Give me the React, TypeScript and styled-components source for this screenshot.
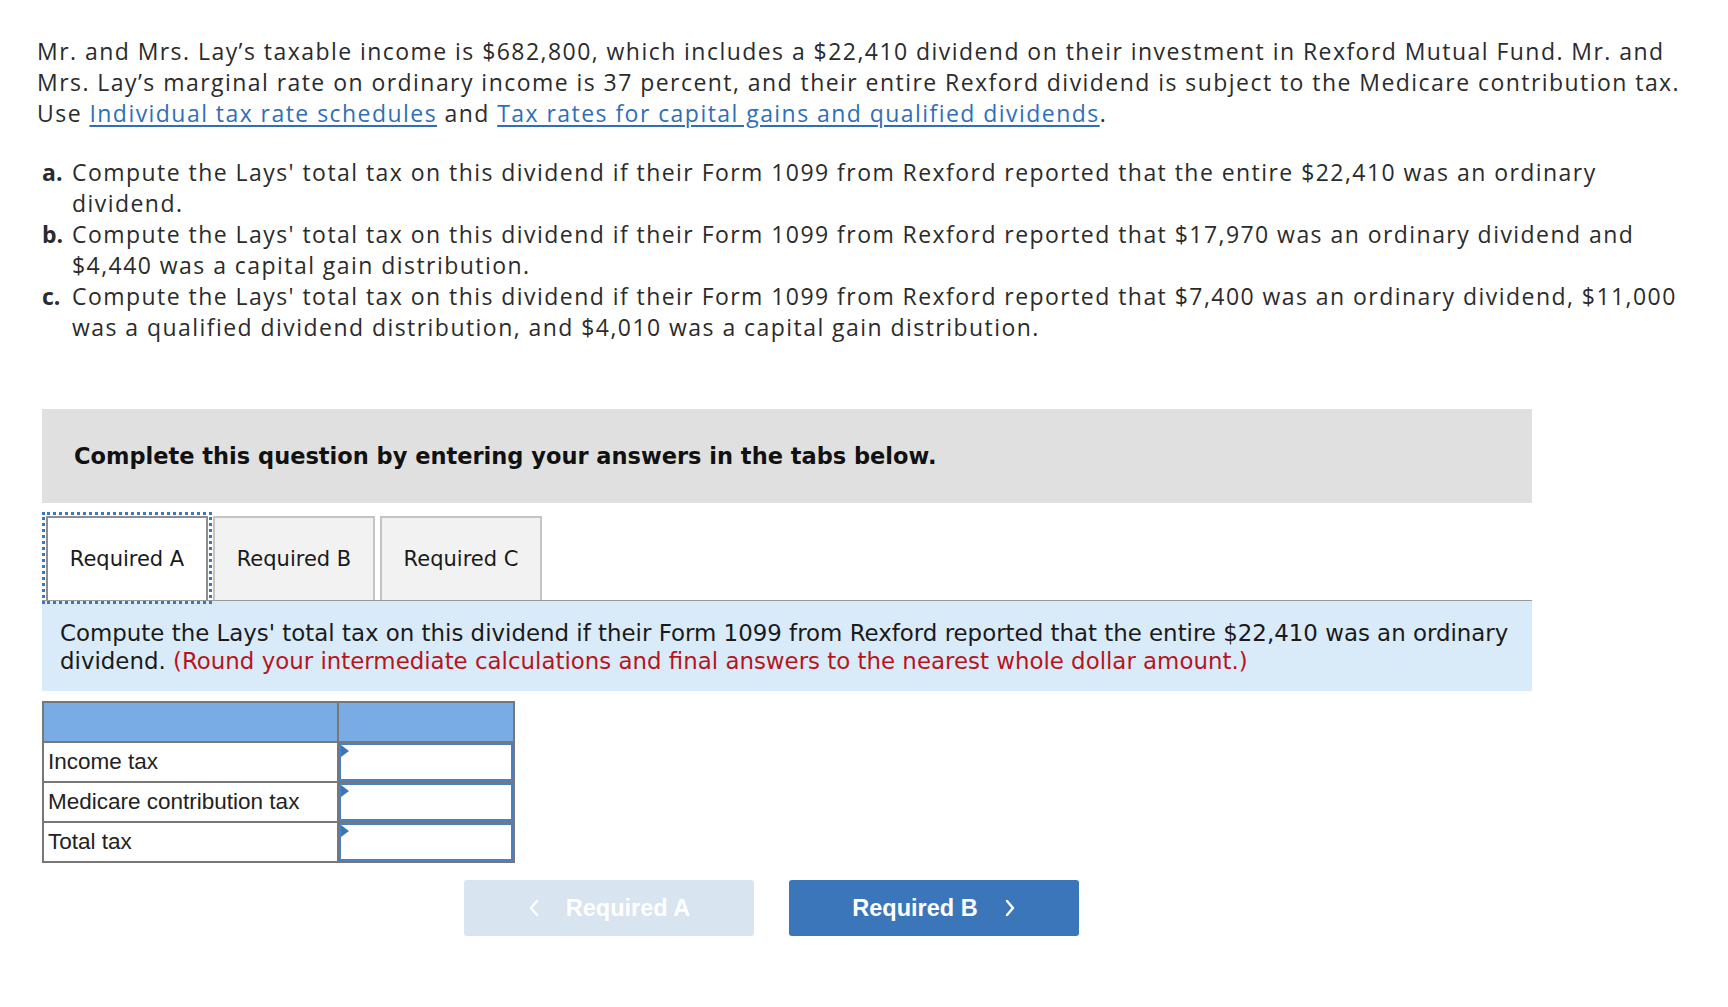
import * as React from 'react'
import styled, { createGlobalStyle } from 'styled-components'

const GlobalStyle = createGlobalStyle`
  html, body {
    margin: 0;
    padding: 0;
    background: #ffffff;
  }
  body {
    font-family: "Open Sans", Lato, sans-serif;
    color: #2b2b2b;
  }
`

type Row = { label: string }

const rows: Row[] = [
  { label: 'Income tax' },
  { label: 'Medicare contribution tax' },
  { label: 'Total tax' },
]

const tabs = ['Required A', 'Required B', 'Required C']

const App: React.FC = () => {
  const [active, setActive] = React.useState(0)

  return (
    <Page>
      <GlobalStyle />
      <Question>
        <Intro>
          Mr. and Mrs. Lay’s taxable income is $682,800, which includes a $22,410 dividend on their
          investment in Rexford Mutual Fund. Mr. and Mrs. Lay’s marginal rate on ordinary income is 37
          percent, and their entire Rexford dividend is subject to the Medicare contribution tax. Use{' '}
          <TextLink href="#">Individual tax rate schedules</TextLink> and{' '}
          <TextLink href="#">Tax rates for capital gains and qualified dividends</TextLink>.
        </Intro>
        <Parts>
          <Part>
            <PartLabel>a.</PartLabel>
            <PartText>
              Compute the Lays' total tax on this dividend if their Form 1099 from Rexford reported that the
              entire $22,410 was an ordinary dividend.
            </PartText>
          </Part>
          <Part>
            <PartLabel>b.</PartLabel>
            <PartText>
              Compute the Lays' total tax on this dividend if their Form 1099 from Rexford reported that
              $17,970 was an ordinary dividend and $4,440 was a capital gain distribution.
            </PartText>
          </Part>
          <Part>
            <PartLabel>c.</PartLabel>
            <PartText>
              Compute the Lays' total tax on this dividend if their Form 1099 from Rexford reported that
              $7,400 was an ordinary dividend, $11,000 was a qualified dividend distribution, and $4,010 was
              a capital gain distribution.
            </PartText>
          </Part>
        </Parts>
      </Question>

      <Answer>
        <Banner>Complete this question by entering your answers in the tabs below.</Banner>

        <TabBar>
          {tabs.map((t, i) => (
            <Tab key={t} active={i === active} onClick={() => setActive(i)}>
              {t}
            </Tab>
          ))}
        </TabBar>

        <Instructions>
          Compute the Lays' total tax on this dividend if their Form 1099 from Rexford reported that the
          entire $22,410 was an ordinary dividend.{' '}
          <Hint>(Round your intermediate calculations and final answers to the nearest whole dollar amount.)</Hint>
        </Instructions>

        <TaxTable>
          <thead>
            <tr>
              <HeadCell wide />
              <HeadCell />
            </tr>
          </thead>
          <tbody>
            {rows.map(r => (
              <tr key={r.label}>
                <LabelCell>{r.label}</LabelCell>
                <InputCell>
                  <Marker />
                  <AmountInput type="text" />
                </InputCell>
              </tr>
            ))}
          </tbody>
        </TaxTable>

        <NavRow>
          <NavButton disabled>
            <Chevron viewBox="0 0 12 20">
              <path d="M9 3 L3 10 L9 17" />
            </Chevron>
            Required A
          </NavButton>
          <NavButton>
            Required B
            <Chevron viewBox="0 0 12 20">
              <path d="M3 3 L9 10 L3 17" />
            </Chevron>
          </NavButton>
        </NavRow>
      </Answer>
    </Page>
  )
}

const Page = styled.div`
  padding: 36px 0 60px 37px;
  width: 1655px;
`

const Question = styled.div`
  font-family: "Open Sans", Lato, sans-serif;
  font-size: 23px;
  letter-spacing: 1.45px;
  line-height: 31px;
  color: #2b2b2b;
`

const Intro = styled.p`
  margin: 0 0 28px 0;
`

const TextLink = styled.a`
  color: #2f6fb7;
  text-decoration: underline;
  text-underline-offset: 3px;
`

const Parts = styled.div`
  display: flex;
  flex-direction: column;
  margin-left: 5px;
`

const Part = styled.div`
  display: flex;
`

const PartLabel = styled.span`
  flex: 0 0 30px;
  font-weight: 700;
  letter-spacing: 0;
`

const PartText = styled.span`
  flex: 1;
`

const Answer = styled.div`
  margin: 66px 0 0 5px;
  width: 1490px;
  font-family: "DejaVu Sans", Verdana, sans-serif;
`

const Banner = styled.div`
  height: 94px;
  display: flex;
  align-items: center;
  padding-left: 32px;
  background: #e0e0e0;
  color: #111;
  font-size: 22.5px;
  font-weight: 700;
`

const TabBar = styled.div`
  display: flex;
  gap: 5px;
  margin-top: 10px;
  padding-left: 4px;
  padding-top: 3px;
`

const Tab = styled.button<{ active?: boolean }>`
  width: 162px;
  height: 84px;
  box-sizing: border-box;
  font-family: "DejaVu Sans", Verdana, sans-serif;
  font-size: 21px;
  color: #1a1a1a;
  background: ${p => (p.active ? '#ffffff' : '#f2f2f2')};
  border: 2px solid ${p => (p.active ? '#8e8e8e' : '#c4c4c4')};
  border-bottom: none;
  outline: ${p => (p.active ? '3px dotted #3a78c4' : 'none')};
  outline-offset: 1px;
  cursor: pointer;
  padding: 0;
`

const Instructions = styled.div`
  background: #d9ebf9;
  border-top: 1px solid #999;
  padding: 18px 10px 16px 18px;
  font-size: 22.9px;
  line-height: 28px;
  color: #1a1a1a;
`

const Hint = styled.span`
  color: #b8141c;
`

const TaxTable = styled.table`
  margin-top: 10px;
  border-collapse: collapse;
  border: 2px solid #777;
  font-family: "Liberation Sans", Arial, sans-serif;
  font-size: 22.5px;
  color: #222;
`

const HeadCell = styled.th<{ wide?: boolean }>`
  width: ${p => (p.wide ? '293px' : '174px')};
  height: 38px;
  background: #79ace4;
  border: 2px solid #777;
  padding: 0;
`

const LabelCell = styled.td`
  height: 38px;
  border: 2px solid #777;
  padding: 0 0 0 4px;
  background: #fff;
  white-space: nowrap;
`

const InputCell = styled.td`
  position: relative;
  border: 2px solid #777;
  padding: 0;
  height: 38px;
`

const Marker = styled.span`
  position: absolute;
  top: 2px;
  left: 2px;
  width: 0;
  height: 0;
  border-top: 6px solid transparent;
  border-bottom: 6px solid transparent;
  border-left: 8px solid #3b76bb;
`

const AmountInput = styled.input`
  display: block;
  box-sizing: border-box;
  width: 100%;
  height: 38px;
  margin: 0;
  border: 2px solid #4a80c6;
  font-family: "Liberation Sans", Arial, sans-serif;
  font-size: 20px;
  text-align: right;
  padding: 0 6px;
  outline: none;
`

const NavRow = styled.div`
  display: flex;
  justify-content: center;
  gap: 35px;
  margin-top: 17px;
  padding-right: 31px;
`

const NavButton = styled.button`
  width: 290px;
  height: 56px;
  display: flex;
  align-items: center;
  justify-content: center;
  gap: 26px;
  border: none;
  border-radius: 3px;
  background: ${p => (p.disabled ? '#d9e4f1' : '#3b76ba')};
  color: #ffffff;
  font-family: "Liberation Sans", Arial, sans-serif;
  font-size: 23.5px;
  font-weight: 700;
  cursor: ${p => (p.disabled ? 'default' : 'pointer')};
`

const Chevron = styled.svg`
  width: 12px;
  height: 20px;
  fill: none;
  stroke: #ffffff;
  stroke-width: 2.4;
  stroke-linecap: round;
  stroke-linejoin: round;
`

export default App
